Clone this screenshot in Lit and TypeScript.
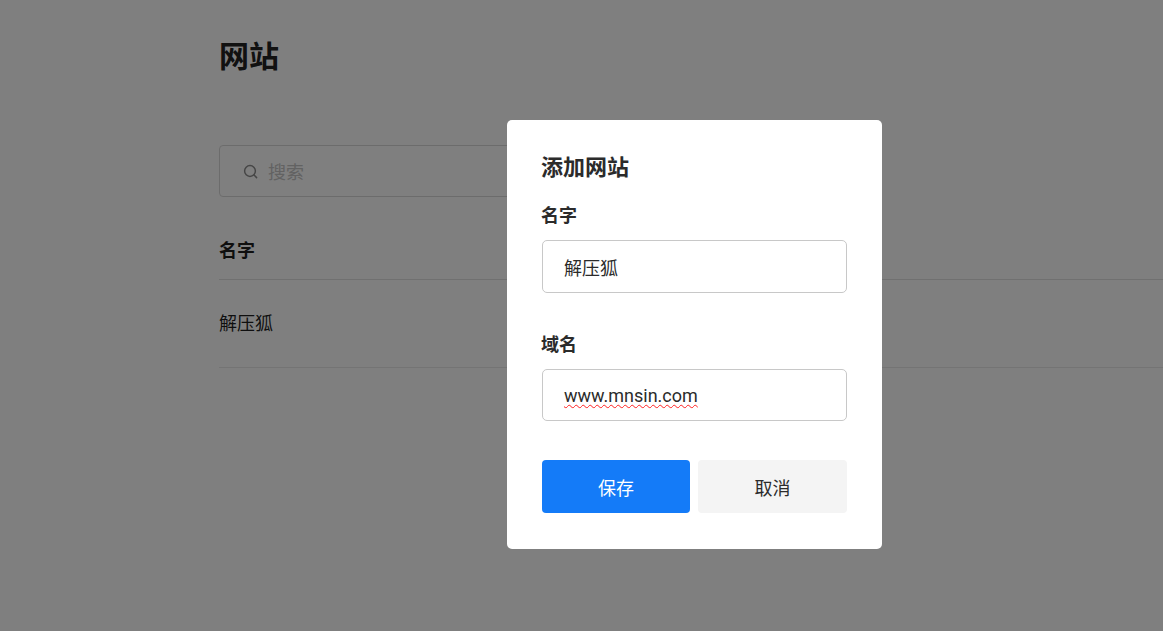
import { LitElement, html, css } from "lit";
import { customElement } from "lit/decorators.js";

@customElement("app-root")
export class AppRoot extends LitElement {
  static styles = css`
    :host {
      display: block;
      position: relative;
      width: 100%;
      height: 631px;
      overflow: hidden;
      background: #fff;
      color: #1f1f1f;
      font-family: "Roboto", "Noto Sans CJK SC", sans-serif;
      font-size: 18px;
    }
    .page { padding: 0 0 0 219px; }
    h1 {
      margin: 0;
      padding-top: 36px;
      height: 145px;
      box-sizing: border-box;
      font-size: 30px;
      line-height: 42px;
      font-weight: 700;
      color: #222;
    }
    .search {
      width: 500px;
      height: 52px;
      box-sizing: border-box;
      border: 1px solid #d9d9d9;
      border-radius: 4px;
      display: flex;
      align-items: center;
      gap: 10px;
      padding-left: 23px;
      color: #c4c4c4;
    }
    .search svg { width: 15px; height: 15px; display: block; }
    .th {
      margin-top: 28px;
      height: 55px;
      box-sizing: border-box;
      border-bottom: 1px solid #e0e0e0;
      font-weight: 700;
      line-height: 52px;
    }
    .td {
      height: 88px;
      box-sizing: border-box;
      border-bottom: 1px solid #e8e8e8;
      line-height: 87px;
    }
    .overlay {
      position: absolute;
      inset: 0;
      background: rgba(0, 0, 0, 0.5);
      display: flex;
      justify-content: center;
      align-items: center;
      padding: 38px 0 0 226px;
      box-sizing: border-box;
    }
    .modal {
      width: 375px;
      height: 429px;
      box-sizing: border-box;
      background: #fff;
      border-radius: 5px;
      padding: 32px 35px 35px;
      display: flex;
      flex-direction: column;
    }
    h2 {
      margin: 0;
      font-size: 22px;
      line-height: 32px;
      font-weight: 700;
      color: #2b2b2b;
      text-indent: -1px;
    }
    label {
      display: block;
      font-weight: 700;
      line-height: 26px;
      color: #2b2b2b;
      text-indent: -1px;
    }
    .l1 { margin-top: 19px; }
    .l2 { margin-top: 39px; }
    .field {
      margin-top: 11px;
      box-sizing: border-box;
      height: 53px;
      border: 1px solid #c8c8c8;
      border-radius: 5px;
      padding-left: 21px;
      display: flex;
      align-items: center;
      color: #2b2b2b;
    }
    .f2 { height: 52px; }
    .wavy {
      text-decoration: underline wavy #ff2020 1px;
      text-decoration-skip-ink: none;
      text-underline-offset: 2px;
    }
    .actions {
      margin-top: 39px;
      display: grid;
      grid-template-columns: 148px 149px;
      gap: 8px;
    }
    button {
      height: 53px;
      border: 0;
      border-radius: 4px;
      font: inherit;
      padding: 0;
    }
    .save { background: #147bf8; color: #fff; }
    .cancel { background: #f4f4f4; color: #2b2b2b; }
  `;

  render() {
    return html`
      <div class="page">
        <h1>网站</h1>
        <div class="search">
          <svg viewBox="0 0 15 15" fill="none" stroke="#8c8c8c" stroke-width="1.5" stroke-linecap="round">
            <circle cx="7" cy="7" r="5.4"></circle>
            <path d="M11 11l2.6 2.6"></path>
          </svg>
          <span>搜索</span>
        </div>
        <div class="th">名字</div>
        <div class="td">解压狐</div>
      </div>
      <div class="overlay">
        <div class="modal">
          <h2>添加网站</h2>
          <label class="l1">名字</label>
          <div class="field">解压狐</div>
          <label class="l2">域名</label>
          <div class="field f2"><span class="wavy">www.mnsin.com</span></div>
          <div class="actions">
            <button class="save">保存</button>
            <button class="cancel">取消</button>
          </div>
        </div>
      </div>
    `;
  }
}
